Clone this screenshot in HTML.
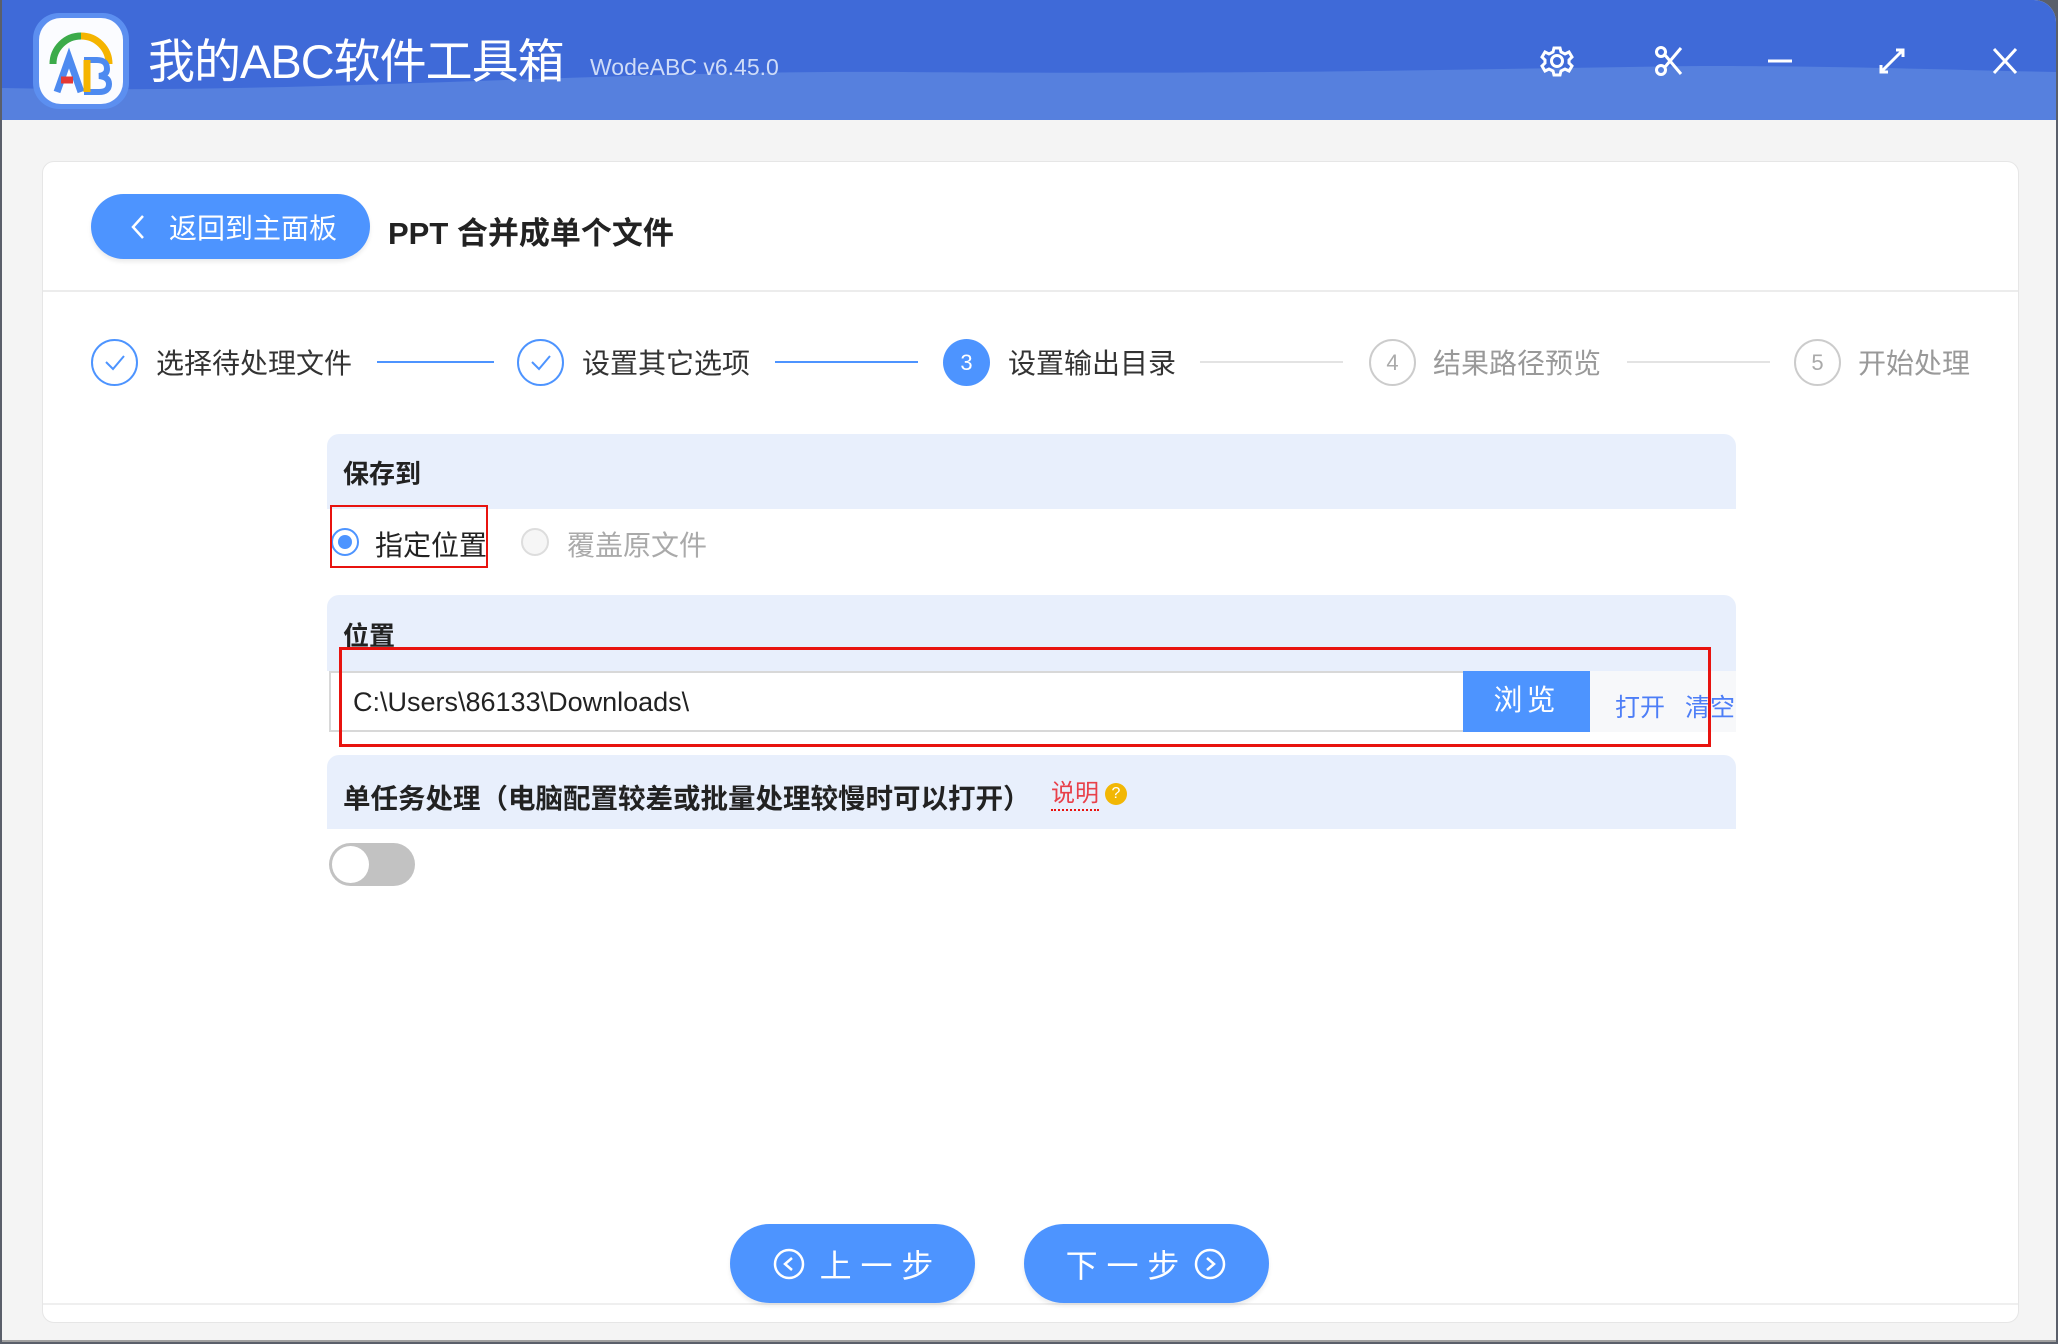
<!DOCTYPE html>
<html><head><meta charset="utf-8"><style>
*{margin:0;padding:0;box-sizing:border-box}
body{width:2058px;height:1344px;overflow:hidden;background:#5a5f6a;font-family:"Liberation Sans","Noto Sans CJK SC",sans-serif;position:relative}
.win{position:absolute;left:2px;top:0;width:2054px;height:1342px;background:#f4f4f4;border-radius:0 22px 0 0;overflow:hidden;border-bottom:2px solid #a0a0a0}
.tb{position:absolute;left:0;top:0;width:100%;height:120px;background:#3f6ad8}
.abs{position:absolute}
.card{position:absolute;left:40px;top:161px;width:1977px;height:1162px;background:#fff;border:1px solid #e6e6e6;border-radius:12px}
.btn{position:absolute;background:#4d94ff;color:#fff;border-radius:40px;display:flex;align-items:center;justify-content:center;box-shadow:0 3px 4px rgba(0,0,0,.08)}
.step{position:absolute;top:362px;transform:translateY(-50%);font-size:28px;color:#333;white-space:nowrap}
.circ{position:absolute;width:47px;height:47px;border-radius:50%;top:339px;display:flex;align-items:center;justify-content:center;font-size:22px}
.line{position:absolute;top:361px;height:2px}
.ph{position:absolute;left:325px;width:1409px;background:#e8effc;border-radius:12px 12px 0 0}
.lbl{position:absolute;font-weight:bold;font-size:26px;color:#222}
</style></head><body>
<div class="win">
<div class="tb">
<svg class="abs" style="left:0;top:0" width="2054" height="120"><path d="M0 88 C300 95 600 70 900 72 C1300 75 1500 68 1700 66 C1850 66 1950 70 2054 72 L2054 120 L0 120 Z" fill="#5680de"/></svg>
<div class="abs" style="left:31px;top:13px;width:96px;height:96px;border-radius:26px;background:#5c8ff0"></div>
<div class="abs" style="left:37px;top:18px;width:84px;height:86px;border-radius:22px;background:#fbfcff"></div>
<svg class="abs" style="left:37px;top:18px" width="84" height="86" viewBox="0 0 84 86">
<path d="M14 46 A28 28 0 0 1 42 18" stroke="#3cab4a" stroke-width="7" fill="none"/>
<path d="M42 18 A28 28 0 0 1 70 46" stroke="#f5b400" stroke-width="7" fill="none"/>
<path d="M18 74 L30 40 L42 74" stroke="#4d8af0" stroke-width="7" fill="none"/>
<path d="M22 62 L34 62" stroke="#e53935" stroke-width="7"/>
<path d="M48 42 L58 42 Q68 42 68 51 Q68 57 60 58 Q70 59 70 66 Q70 74 60 74 L48 74 Z" stroke="#4d8af0" stroke-width="6" fill="none"/>
<path d="M48 42 L48 74" stroke="#f5b400" stroke-width="7"/>
</svg>
<div class="abs" style="left:146px;top:32px;font-size:47px;color:#fff;line-height:60px;letter-spacing:-1px">我的ABC软件工具箱</div>
<div class="abs" style="left:588px;top:52px;font-size:23px;color:#cfdcf7;line-height:30px">WodeABC v6.45.0</div>
<svg class="abs" style="left:1535px;top:40px" width="500" height="42" stroke="#fff" stroke-width="3" fill="none">
<g transform="translate(20,21)"><circle r="5.5"/><path d="M-3 -13 L3 -13 L4 -9 L8 -7 L12 -9 L15 -4 L12 -1 L12 2 L15 5 L12 10 L8 8 L4 10 L3 14 L-3 14 L-4 10 L-8 8 L-12 10 L-15 5 L-12 2 L-12 -1 L-15 -4 L-12 -9 L-8 -7 L-4 -9 Z"/></g>
<g transform="translate(132,21)"><circle cx="-8" cy="-9" r="4.5"/><circle cx="-8" cy="9" r="4.5"/><path d="M-4 -6 L12 13 M-4 6 L12 -13"/></g>
<path d="M231 21 L255 21"/>
<g transform="translate(355,21)"><path d="M-11 11 L11 -11 M4 -11 L11 -11 L11 -4 M-11 4 L-11 11 L-4 11"/></g>
<path d="M457 9 L479 33 M479 9 L457 33"/>
</svg>
</div>
<div class="card">
<div class="abs" style="left:0;top:128px;width:100%;height:2px;background:#ececec"></div>
<div class="abs" style="left:0;top:1141px;width:100%;height:2px;background:#efefef"></div>
</div>
<div class="btn" style="left:89px;top:194px;width:279px;height:65px;font-size:28px;justify-content:flex-start;padding-left:38px"><svg width="18" height="26" style="margin-right:22px"><path d="M14 2 L4 13 L14 24" stroke="#fff" stroke-width="2.5" fill="none"/></svg>返回到主面板</div>
<div class="abs" style="left:386px;top:208px;font-size:31px;font-weight:bold;color:#222">PPT 合并成单个文件</div>

<div class="circ" style="left:89px;border:2px solid #4d94ff"><svg width="22" height="18"><path d="M2 8 L9 15 L20 2" stroke="#4d94ff" stroke-width="2" fill="none"/></svg></div>
<div class="step" style="left:154px">选择待处理文件</div>
<div class="line" style="left:375px;width:117px;background:#4d94ff"></div>
<div class="circ" style="left:515px;border:2px solid #4d94ff"><svg width="22" height="18"><path d="M2 8 L9 15 L20 2" stroke="#4d94ff" stroke-width="2" fill="none"/></svg></div>
<div class="step" style="left:580px">设置其它选项</div>
<div class="line" style="left:773px;width:143px;background:#4d94ff"></div>
<div class="circ" style="left:941px;background:#4d94ff;color:#fff">3</div>
<div class="step" style="left:1006px">设置输出目录</div>
<div class="line" style="left:1198px;width:143px;background:#e3e3e3"></div>
<div class="circ" style="left:1367px;border:2px solid #ccc;color:#aaa">4</div>
<div class="step" style="left:1431px;color:#999">结果路径预览</div>
<div class="line" style="left:1625px;width:143px;background:#e3e3e3"></div>
<div class="circ" style="left:1792px;border:2px solid #ccc;color:#aaa">5</div>
<div class="step" style="left:1856px;color:#999">开始处理</div>

<div class="ph" style="top:434px;height:75px"></div>
<div class="lbl" style="left:341px;top:454px">保存到</div>
<div class="abs" style="left:329px;top:528px;width:28px;height:28px;border-radius:50%;border:2px solid #4d94ff"></div>
<div class="abs" style="left:336px;top:535px;width:14px;height:14px;border-radius:50%;background:#4d94ff"></div>
<div class="abs" style="left:373px;top:524px;font-size:28px;color:#222">指定位置</div>
<div class="abs" style="left:519px;top:528px;width:28px;height:28px;border-radius:50%;border:2px solid #ddd;background:#f6f6f6"></div>
<div class="abs" style="left:565px;top:524px;font-size:28px;color:#aaa">覆盖原文件</div>
<div class="abs" style="left:328px;top:505px;width:158px;height:63px;border:2px solid #e8130f"></div>

<div class="ph" style="top:595px;height:76px"></div>
<div class="lbl" style="left:341px;top:616px">位置</div>
<div class="abs" style="left:1461px;top:671px;width:273px;height:61px;background:#f7f8fa"></div>
<div class="abs" style="left:327px;top:671px;width:1134px;height:61px;background:#fff;border:2px solid #d8d8d8;border-right:none;font-size:27px;color:#222;line-height:59px;padding-left:22px">C:\Users\86133\Downloads\</div>
<div class="abs" style="left:1461px;top:671px;width:127px;height:61px;background:#4d94ff;color:#fff;font-size:29px;line-height:61px;text-align:center;letter-spacing:4px">浏览</div>
<div class="abs" style="left:1613px;top:688px;font-size:25px;color:#4d7ef7">打开</div>
<div class="abs" style="left:1683px;top:688px;font-size:25px;color:#4d7ef7">清空</div>
<div class="abs" style="left:337px;top:647px;width:1372px;height:100px;border:3px solid #e8130f"></div>

<div class="ph" style="top:755px;height:74px"></div>
<div class="lbl" style="left:341px;top:776px;font-size:27.5px">单任务处理（电脑配置较差或批量处理较慢时可以打开）</div>
<div class="abs" style="left:1049px;top:779px;font-size:24px;color:#e8404a;border-bottom:2px dotted #e8130f;line-height:30px">说明</div>
<div class="abs" style="left:1103px;top:783px;width:22px;height:22px;border-radius:50%;background:#f2b705;color:#fff;font-size:16px;text-align:center;line-height:22px">?</div>
<div class="abs" style="left:327px;top:843px;width:86px;height:43px;border-radius:22px;background:#c2c2c2"></div>
<div class="abs" style="left:330px;top:846px;width:37px;height:37px;border-radius:50%;background:#fff"></div>

<div class="btn" style="left:728px;top:1224px;width:245px;height:79px;font-size:32px"><svg width="34" height="34" style="margin-right:14px"><circle cx="17" cy="17" r="14" stroke="#fff" stroke-width="2.5" fill="none"/><path d="M20 11 L13 17 L20 23" stroke="#fff" stroke-width="2.5" fill="none"/></svg>上 一 步</div>
<div class="btn" style="left:1022px;top:1224px;width:245px;height:79px;font-size:32px">下 一 步<svg width="34" height="34" style="margin-left:14px"><circle cx="17" cy="17" r="14" stroke="#fff" stroke-width="2.5" fill="none"/><path d="M14 11 L21 17 L14 23" stroke="#fff" stroke-width="2.5" fill="none"/></svg></div>
</div>
</body></html>
